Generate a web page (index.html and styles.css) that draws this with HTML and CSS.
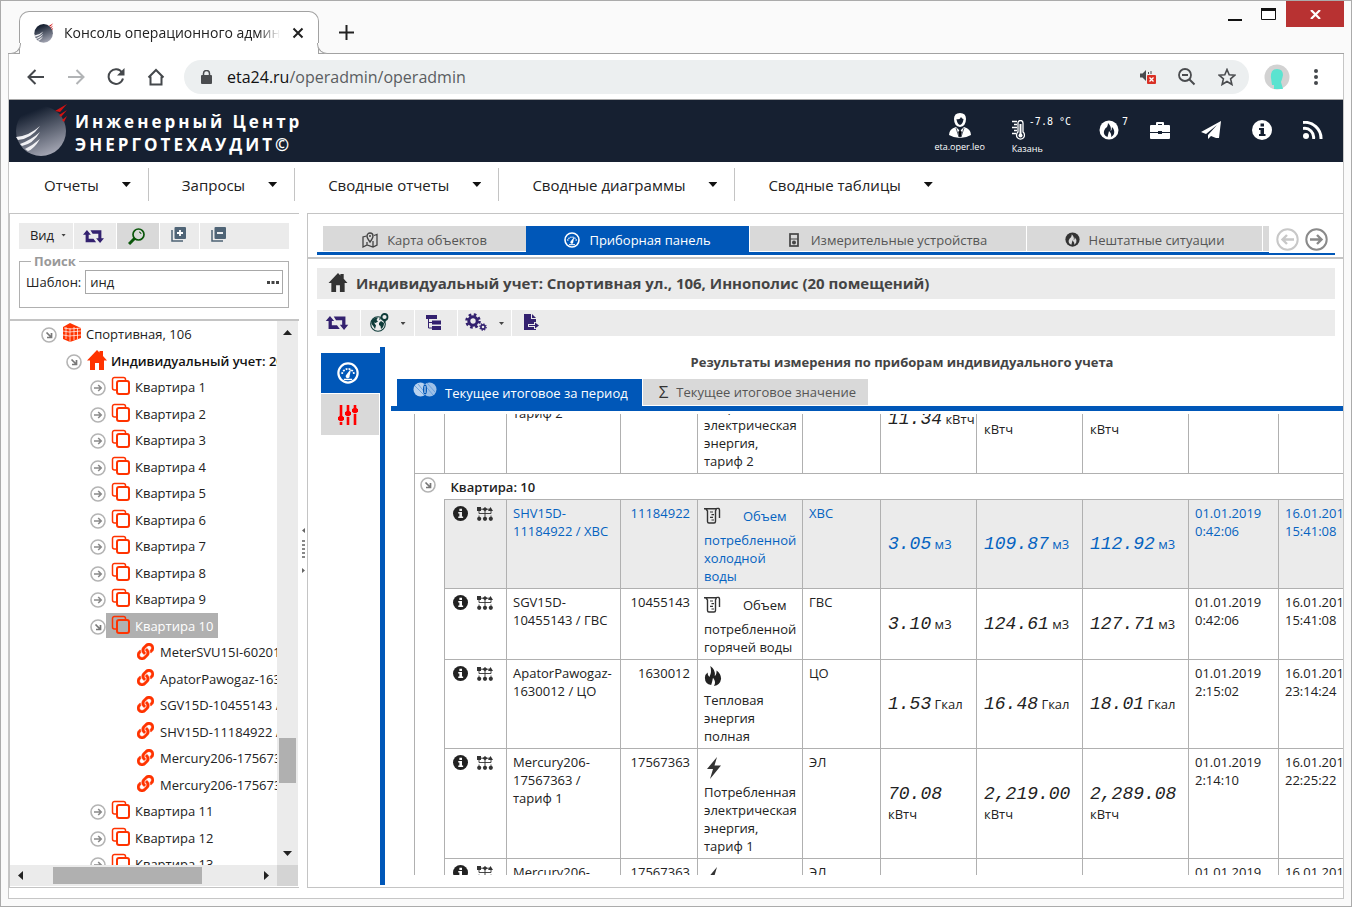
FILE: index.html
```html
<!DOCTYPE html>
<html lang="ru">
<head>
<meta charset="utf-8">
<title>Консоль операционного администратора</title>
<link rel="stylesheet" href="styles.css">
</head>
<body>
<svg class="defs" aria-hidden="true">
  <defs>
    <linearGradient id="ball" x1="0.3" y1="0" x2="0.7" y2="1"><stop offset="0.1" stop-color="#162031"/><stop offset="1" stop-color="#a9abb8"/></linearGradient>
    <symbol id="logo" viewBox="0 0 54 54">
      <circle cx="26" cy="28" r="25" fill="url(#ball)"/>
      <path d="M1 34Q14 33 25 23Q16 36 3 37ZM5 41Q16 37 25 29Q18 41 7 43ZM10 46Q18 42 25 36Q19 46 13 48Z" fill="#f1f1f4"/>
      <path d="M40 8 52 1 45 9ZM44 12 52 7 46 14ZM47 17 52 13 49 19Z" fill="#d41212"/>
    </symbol>
    <symbol id="go" viewBox="0 0 16 16"><circle cx="8" cy="8" r="7" fill="none" stroke="#b4b4b4" stroke-width="1.6"/><path d="M4 8h7M8.200 5l3 3-3 3" fill="none" stroke="#8a8a8a" stroke-width="1.6"/></symbol>
    <symbol id="open" viewBox="0 0 16 16"><circle cx="8" cy="8" r="7" fill="none" stroke="#b4b4b4" stroke-width="1.6"/><path d="M5.500 5.500l5 5M10.500 6v4.500H6" fill="none" stroke="#777" stroke-width="1.700"/></symbol>
    <symbol id="flat" viewBox="0 0 20 20"><path d="M14.500 4V3.500A2 2 0 0 0 12.500 1.500H3.500A2 2 0 0 0 1.500 3.500V12A2 2 0 0 0 3.500 14H5" fill="none" stroke="#ff3300" stroke-width="1.500"/><rect x="6" y="5" width="12" height="13" rx="2" fill="none" stroke="#ff3300" stroke-width="2"/></symbol>
    <symbol id="link" viewBox="0 0 512 512"><path fill="#ff3300" stroke="#ff3300" stroke-width="12" d="M326.600 185.400c59.700 59.800 58.900 155.700.400 214.600l-67.500 67.500c-59.300 59.300-155.700 59.300-215 0-59.200-59.300-59.200-155.700 0-215l37.100-37.100c9.800-9.800 26.700-3.300 27.300 10.600.6 17.700 3.800 35.500 9.700 52.700 2 5.800.6 12.300-3.800 16.600l-13.100 13.100c-28 28-28.900 73.700-1.200 102 28 28.600 74.100 28.700 102.300.5l67.500-67.500c28.200-28.200 28-73.800 0-101.800-3.700-3.700-7.400-6.500-10.300-8.500a16 16 0 0 1-6.900-12.600c-.4-10.600 3.300-21.500 11.700-29.800l21.100-21.100c5.500-5.500 14.200-6.200 20.600-1.700a152 152 0 0 1 20.100 17.500zM467.500 44.400c-59.300-59.300-155.700-59.300-215 0l-67.500 67.500c-58.500 58.900-59.400 154.900.4 214.700a153 153 0 0 0 20.500 17.500c6.400 4.500 15.100 3.800 20.600-1.700l21.100-21.100c8.400-8.400 12.100-19.200 11.700-29.800a16 16 0 0 0-6.900-12.600c-2.900-2-6.600-4.800-10.300-8.500-28-28-28.200-73.600 0-101.800l67.500-67.500c28.200-28.200 74.300-28.100 102.300.5 27.800 28.300 26.900 73.900-1.200 102l-13.100 13.100c-4.400 4.400-5.800 10.800-3.800 16.600 5.900 17.200 9 35 9.700 52.700.5 13.900 17.500 20.400 27.300 10.600l37.100-37.100c59.300-59.300 59.300-155.700 0-215z"/></symbol>
    <symbol id="house" viewBox="0 0 20 20"><path d="M10 0 12.500 2.500V1H16V6L20 10.500H17V20H12V13H8V20H3V10.500H0Z" fill="currentColor"/></symbol>
    <symbol id="swap" viewBox="0 0 24 16"><path d="M4.500 1 9 6.500H6.500V11H12L15 15H3V6.500H0ZM19.500 16 15 10.500H17.500V5.500H11L8.500 1.500H21V10.500H24Z" fill="#33216f"/></symbol>
    <symbol id="gauge" viewBox="0 0 24 24"><circle cx="12" cy="12" r="10.500" fill="none" stroke="#fff" stroke-width="2.400"/><path d="M5.500 13A6.600 6.600 0 0 1 18.500 13" fill="none" stroke="#fff" stroke-width="2" stroke-dasharray="2 1.200"/><path d="M15.500 7 13.800 15A2.200 2.200 0 1 1 10.200 13.800Z" fill="#fff"/><path d="M7.500 19h9" stroke="#fff" stroke-width="1.500"/></symbol>
    <symbol id="flame" viewBox="0 0 20 22"><path d="M7 0Q13 4 12 11Q14 10 14 5Q19 9 19 14Q18 21 11 22Q14 18 10 13Q9 18 8 21Q1 20 1 13Q1 9 4 7Q4 11 6 12Q9 7 7 0Z" fill="currentColor"/></symbol>
    <symbol id="info" viewBox="0 0 20 20"><circle cx="10" cy="10" r="10" fill="currentColor"/><path d="M8.500 3.500h3.500v3H8.500ZM7 8h5v6h1.500v2H7v-2h1.500v-4H7Z" fill="var(--hole)"/></symbol>
    <symbol id="net" viewBox="0 0 16 14"><path d="M0 0h4v4H0ZM8 0l2.500 2.200L8 4.400 5.500 2.200ZM13.500 0 16 4h-5Z" fill="#333"/><path d="M2 4v2.500h12V4M2 11V8.500M8 4v7M14 11V8.500M3 2.200h10" stroke="#333" stroke-width="0.900" fill="none"/><circle cx="2.200" cy="11.800" r="2.100" fill="#333"/><circle cx="8" cy="11.800" r="2.100" fill="#333"/><circle cx="13.800" cy="11.800" r="2.100" fill="#333"/></symbol>
    <symbol id="beaker" viewBox="0 0 17 17"><path d="M0 1.700h12.500L11.500 4V14.500q0 1.500-1.500 1.500H5q-1.500 0-1.500-1.500V4L2 2M12 1.700q3.500-1 3.500 1.300v8" fill="none" stroke="#333" stroke-width="1.400"/><path d="M6 5h3M7.500 7.700H10M6 10.400h3M7.500 13H10" stroke="#333" stroke-width="1.200"/></symbol>
    <symbol id="bolt" viewBox="0 0 14 22"><path d="M10 0 0 12H6L3 22 14 8.500H7.500Z" fill="#333"/></symbol>
    <symbol id="firedisc" viewBox="0 0 20 20"><circle cx="10" cy="10" r="9.500" fill="currentColor"/><path d="M9 3Q13 7 11.500 11Q13 10 13 7Q16 10 15 14Q14 16 12 17Q13 14 10 11Q9 15 8.500 17Q4 15 5 11Q6 8 8 7Q9 5 9 3Z" fill="var(--hole)"/></symbol>
  </defs>
</svg>

<div class="titlebar">
  <div class="browser-tab">
    <svg class="favicon"><use href="#logo"/></svg>
    <span class="tab-title">Консоль операционного администратора</span>
    <button class="plain" aria-label="Закрыть вкладку"><svg width="12" height="12" viewBox="0 0 12 12"><path d="M1.500 1.500l9 9M10.500 1.500l-9 9" stroke="#222" stroke-width="2"/></svg></button>
  </div>
  <button class="plain new-tab" aria-label="Новая вкладка"><svg width="15" height="15" viewBox="0 0 15 15"><path d="M7.500 0v15M0 7.500h15" stroke="#222" stroke-width="2"/></svg></button>
  <div class="window-buttons">
    <button class="plain" aria-label="Свернуть"><svg width="14" height="14" viewBox="0 0 14 14"><path d="M0 12h14" stroke="#111" stroke-width="2"/></svg></button>
    <button class="plain" aria-label="Развернуть"><svg width="15" height="12" viewBox="0 0 15 12"><path d="M.5 2v9.500h14V2" fill="#fff" stroke="#111"/><path d="M0 0h15v3H0z" fill="#111"/></svg></button>
    <button class="plain win-close" aria-label="Закрыть"><svg width="11" height="9" viewBox="0 0 11 9"><path d="M1 0l9 9M10 0L1 9" stroke="#fff" stroke-width="2.200"/></svg></button>
  </div>
</div>

<div class="frame">
  <div class="addressbar">
    <button class="plain" aria-label="Назад"><svg width="18" height="16" viewBox="0 0 18 16"><path d="M17 8H2M8.500 1L1.500 8l7 7" fill="none" stroke="#45484c" stroke-width="2"/></svg></button>
    <button class="plain" aria-label="Вперёд"><svg width="18" height="16" viewBox="0 0 18 16"><path d="M1 8h15M9.500 1l7 7-7 7" fill="none" stroke="#b2b4b6" stroke-width="2"/></svg></button>
    <button class="plain" aria-label="Обновить"><svg width="18" height="17" viewBox="0 0 18 17"><path d="M15 4.500A7.300 7.300 0 1 0 16 10.500" fill="none" stroke="#45484c" stroke-width="2"/><path d="M17.500 0v7.500H10z" fill="#45484c"/></svg></button>
    <button class="plain" aria-label="Домой"><svg width="18" height="18" viewBox="0 0 18 18"><path d="M1.500 9.500 9 2l7.500 7.500M3.500 8.500V16.500h11V8.500" fill="none" stroke="#45484c" stroke-width="2"/></svg></button>
    <div class="omnibox">
      <svg width="11" height="14" viewBox="0 0 11 14"><rect y="5" width="11" height="9" rx="1" fill="#4a4c4f"/><path d="M2.500 6V3.500a3 3 0 0 1 6 0V6" fill="none" stroke="#4a4c4f" stroke-width="1.500"/></svg>
      <div class="url" role="textbox" contenteditable="true" spellcheck="false" aria-label="Адрес">eta24.ru<span>/operadmin/operadmin</span></div>
      <svg width="17" height="17" viewBox="0 0 17 17"><path d="M1 5.500h2.500L7 2v11L3.500 9.500H1Z" fill="#4a4c4f"/><path d="M9.500 4v2M12 3v3" stroke="#4a4c4f"/><rect x="8" y="7" width="9" height="9" rx="1" fill="#d93025"/><path d="M10.500 9.500l4 4M14.500 9.500l-4 4" stroke="#fff" stroke-width="1.300"/></svg>
      <svg width="18" height="18" viewBox="0 0 18 18"><circle cx="7" cy="7" r="6" fill="none" stroke="#4a4c4f" stroke-width="1.800"/><path d="M4 7h6M11.500 11.500l5 5" stroke="#4a4c4f" stroke-width="2"/></svg>
      <svg width="18" height="18" viewBox="0 0 18 18"><path d="M9 1.500l2.200 5.200 5.700.5-4.300 3.700 1.300 5.600L9 13.500l-4.900 3 1.300-5.600L1.100 7.200l5.700-.5Z" fill="none" stroke="#4a4c4f" stroke-width="1.600"/></svg>
    </div>
    <svg class="avatar" viewBox="0 0 26 26"><circle cx="13" cy="13" r="12.500" fill="#d2d2d2"/><path d="M13 5Q19 5 19 11Q18 16 17 18L19 25H10V21H8L7 14Q6 5 13 5Z" fill="#5be3d0"/></svg>
    <button class="plain kebab" aria-label="Меню"><svg width="4" height="16" viewBox="0 0 4 16"><circle cx="2" cy="2" r="2"/><circle cx="2" cy="8" r="2"/><circle cx="2" cy="14" r="2"/></svg></button>
  </div>

  <header class="app-header">
    <svg class="brand-logo"><use href="#logo"/></svg>
    <div class="brand">Инженерный Центр<br>ЭНЕРГОТЕХАУДИТ©</div>
    <div class="header-item user">
      <svg width="22" height="25" viewBox="0 0 22 25"><path d="M5 6Q5 0 11 0Q17 0 17 6Q17 13 11 14Q5 13 5 6Z" fill="#fff"/><path d="M7.500 6Q11 7 12 4Q13 6 14.500 6Q14 11 11 12Q8 11 7.500 6Z" fill="#162031"/><path d="M0 22Q0 16 7 14L11 18 15 14Q22 16 22 22Q17 25 11 25Q5 25 0 22Z" fill="#fff"/><path d="M11 17l1.500 2-.8 5h-1.400l-.8-5ZM7 15l3 9M15 15l-3 9" stroke="#162031" stroke-width=".7"/></svg>
      <span class="caption">eta.oper.leo</span>
    </div>
    <div class="header-item weather">
      <div class="weather-row"><svg width="13" height="20" viewBox="0 0 13 20"><path d="M0 1.500h5M2 4.500h3M0 7.500h5M2 10.500h3M0 13.500h4" stroke="#fff" stroke-width="1.500"/><path d="M6 3a2.500 2.500 0 0 1 5 0v9a4 4 0 1 1-5 0Z" fill="#162031" stroke="#fff" stroke-width="1.300"/><path d="M8.500 4v11" stroke="#fff" stroke-width="2"/><circle cx="8.500" cy="15.500" r="2" fill="#fff"/></svg><span class="mono">-7.8 °C</span></div>
      <span class="caption">Казань</span>
    </div>
    <div class="header-icons">
      <button class="plain with-count" aria-label="Нештатные ситуации"><svg width="20" height="20"><use href="#firedisc"/></svg><span class="count mono">7</span></button>
      <button class="plain" aria-label="Портфель"><svg width="20" height="17" viewBox="0 0 20 17"><path d="M6 3V1q0-1 1-1h6q1 0 1 1v2h5q1 0 1 1v6H12V9H8v1H0V4q0-1 1-1ZM8 3h4V2H8ZM0 11h8v1h4v-1h8v5q0 1-1 1H1q-1 0-1-1Z" fill="#fff"/></svg></button>
      <button class="plain" aria-label="Сообщения"><svg width="20" height="18" viewBox="0 0 20 18"><path d="M20 0 0 11 5 13 16 4 7 14V18L10 15 15 17H18Z" fill="#fff"/></svg></button>
      <button class="plain" aria-label="Информация"><svg width="20" height="20"><use href="#info"/></svg></button>
      <button class="plain" aria-label="RSS"><svg width="20" height="18" viewBox="0 0 20 18"><circle cx="3" cy="15" r="3" fill="#fff"/><path d="M0 7.500A9 9 0 0 1 10.500 18M0 1.500A16 16 0 0 1 18 18" fill="none" stroke="#fff" stroke-width="3"/></svg></button>
    </div>
  </header>

  <nav class="menu">
    <button class="plain menu-item">Отчеты<i class="caret"></i></button>
    <button class="plain menu-item">Запросы<i class="caret"></i></button>
    <button class="plain menu-item">Сводные отчеты<i class="caret"></i></button>
    <button class="plain menu-item">Сводные диаграммы<i class="caret"></i></button>
    <button class="plain menu-item">Сводные таблицы<i class="caret"></i></button>
  </nav>

  <main class="main">
    <aside class="left-panel">
      <div class="toolbar tree-toolbar">
        <button class="plain tool view-tool">Вид <i class="caret small"></i></button>
        <button class="plain tool" aria-label="Обновить"><svg width="21" height="14"><use href="#swap"/></svg></button>
        <button class="plain tool pressed" aria-label="Поиск"><svg width="17" height="17" viewBox="0 0 17 17"><circle cx="10.500" cy="6.500" r="5.500" fill="none" stroke="#0a560a" stroke-width="1.700"/><path d="M6.500 10.500l-5.500 5.500" stroke="#0a560a" stroke-width="3"/><path d="M11 4q2 0 2 2" fill="none" stroke="#0a560a"/></svg></button>
        <button class="plain tool" aria-label="Развернуть все"><svg width="15" height="15" viewBox="0 0 15 15"><path d="M1 3v11h11" fill="none" stroke="#4f6476" stroke-width="1.500"/><rect x="3.500" width="11.500" height="12" rx="1" fill="#4f6476"/><path d="M9 3v6M6 6h6" stroke="#fff" stroke-width="1.800"/></svg></button>
        <button class="plain tool" aria-label="Свернуть все"><svg width="15" height="15" viewBox="0 0 15 15"><path d="M1 3v11h11" fill="none" stroke="#4f6476" stroke-width="1.500"/><rect x="3.500" width="11.500" height="12" rx="1" fill="#4f6476"/><path d="M6 6h6" stroke="#fff" stroke-width="1.800"/></svg></button>
      </div>
      <fieldset class="search">
        <legend>Поиск</legend>
        <label for="pattern">Шаблон:</label>
        <div class="search-box"><input id="pattern" type="text" value="инд"><button class="plain" aria-label="Выбрать"><svg width="12" height="3" viewBox="0 0 12 3"><path d="M0 0h3v3H0zM4.500 0h3v3h-3zM9 0h3v3H9z" fill="#444"/></svg></button></div>
      </fieldset>
      <div class="tree-area">
        <ul class="tree">
          <li class="l0"><svg class="twist"><use href="#open"/></svg><span class="node"><svg viewBox="0 0 20 20"><path d="M8 0 19 5V15L8 19 1 16V4Z" fill="#ff3300"/><path d="M1 8l6 1 12-1M1 12l6 1 12-1M8 5v14M4 4v12M12 4v13M15.500 5v11M2 5l6 1 11-1" stroke="#fff" fill="none" stroke-width=".7"/></svg>Спортивная, 106</span></li>
          <li class="l1"><svg class="twist"><use href="#open"/></svg><span class="node strong"><svg class="orange"><use href="#house"/></svg>Индивидуальный учет: 20 помещений</span></li>
          <li class="l2"><svg class="twist"><use href="#go"/></svg><span class="node"><svg><use href="#flat"/></svg>Квартира 1</span></li>
          <li class="l2"><svg class="twist"><use href="#go"/></svg><span class="node"><svg><use href="#flat"/></svg>Квартира 2</span></li>
          <li class="l2"><svg class="twist"><use href="#go"/></svg><span class="node"><svg><use href="#flat"/></svg>Квартира 3</span></li>
          <li class="l2"><svg class="twist"><use href="#go"/></svg><span class="node"><svg><use href="#flat"/></svg>Квартира 4</span></li>
          <li class="l2"><svg class="twist"><use href="#go"/></svg><span class="node"><svg><use href="#flat"/></svg>Квартира 5</span></li>
          <li class="l2"><svg class="twist"><use href="#go"/></svg><span class="node"><svg><use href="#flat"/></svg>Квартира 6</span></li>
          <li class="l2"><svg class="twist"><use href="#go"/></svg><span class="node"><svg><use href="#flat"/></svg>Квартира 7</span></li>
          <li class="l2"><svg class="twist"><use href="#go"/></svg><span class="node"><svg><use href="#flat"/></svg>Квартира 8</span></li>
          <li class="l2"><svg class="twist"><use href="#go"/></svg><span class="node"><svg><use href="#flat"/></svg>Квартира 9</span></li>
          <li class="l2"><svg class="twist"><use href="#open"/></svg><span class="node selected"><svg><use href="#flat"/></svg>Квартира 10</span></li>
          <li class="l3"><span class="node"><svg><use href="#link"/></svg>MeterSVU15I-60201584</span></li>
          <li class="l3"><span class="node"><svg><use href="#link"/></svg>ApatorPawogaz-1630012</span></li>
          <li class="l3"><span class="node"><svg><use href="#link"/></svg>SGV15D-10455143 / ГВС</span></li>
          <li class="l3"><span class="node"><svg><use href="#link"/></svg>SHV15D-11184922 / ХВС</span></li>
          <li class="l3"><span class="node"><svg><use href="#link"/></svg>Mercury206-17567363</span></li>
          <li class="l3"><span class="node"><svg><use href="#link"/></svg>Mercury206-17567363</span></li>
          <li class="l2"><svg class="twist"><use href="#go"/></svg><span class="node"><svg><use href="#flat"/></svg>Квартира 11</span></li>
          <li class="l2"><svg class="twist"><use href="#go"/></svg><span class="node"><svg><use href="#flat"/></svg>Квартира 12</span></li>
          <li class="l2"><svg class="twist"><use href="#go"/></svg><span class="node"><svg><use href="#flat"/></svg>Квартира 13</span></li>
        </ul>
        <div class="vbar"><i class="arrow up"></i><div class="vtrack"><div class="vthumb"></div></div><i class="arrow down"></i></div>
        <div class="hbar"><i class="arrow left"></i><div class="htrack"><div class="hthumb"></div></div><i class="arrow right"></i></div>
        <div class="bar-corner"></div>
      </div>
    </aside>

    <div class="splitter"><svg width="5" height="46" viewBox="0 0 5 46"><path d="M4 0v5L1 2.500ZM1 40v5l3-2.500Z" fill="#666"/><path d="M1 13h3M1 17h3M1 21h3M1 25h3M1 29h3" stroke="#888" stroke-width="2"/></svg></div>

    <section class="right-panel">
      <div class="tabs-wrap">
        <div class="tabs" role="tablist">
          <button class="plain tab t1" role="tab"><svg width="16" height="16" viewBox="0 0 16 16"><path d="M4.500 4 1 5V15l4-2 6 2 4-2V2.500l-3 1M5 10v3M11 9v6" fill="none" stroke="#444" stroke-width="1.300"/><path d="M8 1a3 3 0 0 1 3 3q0 2-3 6Q5 6 5 4a3 3 0 0 1 3-3Z" fill="none" stroke="#444" stroke-width="1.400"/><circle cx="8" cy="4" r="1" fill="#444"/></svg>Карта объектов</button>
          <button class="plain tab t2 active" role="tab" aria-selected="true"><svg width="16" height="16"><use href="#gauge"/></svg>Приборная панель</button>
          <button class="plain tab t3" role="tab"><svg width="10" height="14" viewBox="0 0 10 14"><rect x="1" y="1" width="8" height="12" fill="none" stroke="#444" stroke-width="1.700"/><path d="M1 6h8" stroke="#444"/><circle cx="5" cy="9.500" r="2" fill="#444"/></svg>Измерительные устройства</button>
          <button class="plain tab t4" role="tab"><svg width="15" height="15"><use href="#firedisc"/></svg>Нештатные ситуации</button>
          <span class="tab t5"></span>
        </div>
        <div class="tab-scroll">
          <button class="plain dim" aria-label="Назад"><svg width="23" height="23" viewBox="0 0 23 23"><circle cx="11.500" cy="11.500" r="10.200" fill="none" stroke="currentColor" stroke-width="2"/><path d="M18 11.500H6.500M11 7l-4.500 4.500L11 16" fill="none" stroke="currentColor" stroke-width="2.400"/></svg></button>
          <button class="plain" aria-label="Вперёд"><svg width="23" height="23" viewBox="0 0 23 23"><circle cx="11.500" cy="11.500" r="10.200" fill="none" stroke="currentColor" stroke-width="2"/><path d="M5 11.500h11.500M12 7l4.500 4.500L12 16" fill="none" stroke="currentColor" stroke-width="2.400"/></svg></button>
        </div>
      </div>

      <h1 class="page-title"><svg width="20" height="19"><use href="#house"/></svg>Индивидуальный учет: Спортивная ул., 106, Иннополис (20 помещений)</h1>

      <div class="toolbar page-toolbar">
        <button class="plain tool" aria-label="Обновить"><svg width="24" height="15"><use href="#swap"/></svg></button>
        <button class="plain tool wide" aria-label="Карта"><svg width="19" height="19" viewBox="0 0 19 19"><circle cx="8" cy="11" r="7.300" fill="#ebebeb" stroke="#0e3b39" stroke-width="1.100"/><path d="M1.500 8Q4 4 8 4.500L6.500 7 8 8.500 5.500 10 4 9.500 6 12.500 5 16Q3.500 13 1.500 11ZM9 10l2-2 3 2q0 4-3 6L10.500 13 9 12ZM10 4l1 2-2 1Z" fill="#0e3b39"/><circle cx="14.500" cy="4" r="3" fill="#ebebeb" stroke="#0e3b39" stroke-width="1.800"/><path d="M12.500 6.500h4l-2 4Z" fill="#0e3b39"/></svg><i class="caret small"></i></button>
        <button class="plain tool" aria-label="Структура"><svg width="16" height="15" viewBox="0 0 16 15"><path d="M0 0h11v4H0zM6 5.500h9v4H6zM6 11h9v4H6z" fill="#33216f"/><path d="M2.500 4v9H6M2.500 7.500H6" fill="none" stroke="#33216f"/></svg></button>
        <button class="plain tool wide" aria-label="Настройки"><svg width="22" height="18" viewBox="0 0 22 18"><circle cx="8" cy="8" r="4.200" fill="none" stroke="#33216f" stroke-width="3"/><circle cx="8" cy="8" r="6.500" fill="none" stroke="#33216f" stroke-width="2.600" stroke-dasharray="2.600 2.505"/><circle cx="18" cy="14" r="2.100" fill="none" stroke="#33216f" stroke-width="1.600"/><circle cx="18" cy="14" r="3.200" fill="none" stroke="#33216f" stroke-width="1.200" stroke-dasharray="1.250 1.260"/></svg><i class="caret small"></i></button>
        <button class="plain tool" aria-label="Экспорт"><svg width="15" height="16" viewBox="0 0 15 16"><path d="M0 0h7v5h5v3h-2v2H4v3h6v2h2v1H0ZM8 0l4 4H8Z" fill="#33216f"/><path d="M5 11h6V8.500l4 3-4 3V12H5Z" fill="#33216f"/></svg></button>
      </div>

      <div class="content">
        <div class="side-tabs">
          <button class="plain side-tab active" aria-label="Приборная панель"><svg width="22" height="22"><use href="#gauge"/></svg></button>
          <button class="plain side-tab" aria-label="Параметры"><svg width="20" height="20" viewBox="0 0 20 20"><path d="M3 0v13M3 17v3M10 0v6M10 12v8M17 0v3M17 9v11" stroke="#f00" stroke-width="2.600"/><path d="M0 13.500h6M7 8.500h6M14 5.500h6" stroke="#f00" stroke-width="3"/><circle cx="3" cy="13.500" r="2.800" fill="#f00"/><circle cx="10" cy="8.500" r="2.800" fill="#f00"/><circle cx="17" cy="5.500" r="2.800" fill="#f00"/></svg></button>
        </div>
        <div class="results">
          <h2>Результаты измерения по приборам индивидуального учета</h2>
          <div class="sub-tabs" role="tablist">
            <button class="plain sub-tab active" role="tab" aria-selected="true"><svg class="rings" width="24" height="15" viewBox="0 0 24 15"><circle cx="7.500" cy="7.500" r="7" fill="#b8d2ef"/><circle cx="16.500" cy="7.500" r="7" fill="#b8d2ef" fill-opacity=".85"/><path d="M2 4l9 9M5 2l8 10M10 1l10 12M14 1l8 9" stroke="#5c98da" stroke-width=".8"/><ellipse cx="12" cy="7.500" rx="2" ry="5" fill="#0057b8"/><path d="M12 4v7" stroke="#dbe9f8"/></svg>Текущее итоговое за период</button>
            <button class="plain sub-tab second" role="tab"><span class="sigma">Σ</span>Текущее итоговое значение</button>
          </div>
          <div class="grid-view">
            <table class="grid">
              <colgroup><col class="c-exp"><col class="c-act"><col class="c-name"><col class="c-num"><col class="c-par"><col class="c-type"><col class="c-v1"><col class="c-v2"><col class="c-v2"><col class="c-date"><col class="c-date"></colgroup>
              <tbody>
              <tr><td class="rail"></td><td class="acts"><div><svg class="i-info"><use href="#info"/></svg><svg class="i-net"><use href="#net"/></svg></div></td><td>Mercury206-<br>17567363 /<br>тариф 2</td><td class="num">17567363</td><td><div class="lead tall"><svg width="14" height="22"><use href="#bolt"/></svg></div>Потребленная<br>электрическая<br>энергия,<br>тариф 2</td><td>ЭЛ</td><td class="val"><b>11.34</b> кВтч</td><td class="val"><b>155.03</b><br>кВтч</td><td class="val"><b>865.23</b><br>кВтч</td><td>01.01.2019<br>2:14:10</td><td>16.01.2019<br>22:25:22</td></tr>
              <tr class="group"><td class="rail"><svg class="twist"><use href="#open"/></svg></td><td colspan="10">Квартира: 10</td></tr>
              <tr class="current"><td class="rail"></td><td class="acts"><div><svg class="i-info"><use href="#info"/></svg><svg class="i-net"><use href="#net"/></svg></div></td><td>SHV15D-<br>11184922 / ХВС</td><td class="num">11184922</td><td><div class="lead"><svg width="17" height="17"><use href="#beaker"/></svg>Объем</div>потребленной<br>холодной<br>воды</td><td>ХВС</td><td class="val"><b>3.05</b> м3</td><td class="val"><b>109.87</b> м3</td><td class="val"><b>112.92</b> м3</td><td>01.01.2019<br>0:42:06</td><td>16.01.2019<br>15:41:08</td></tr>
              <tr><td class="rail"></td><td class="acts"><div><svg class="i-info"><use href="#info"/></svg><svg class="i-net"><use href="#net"/></svg></div></td><td>SGV15D-<br>10455143 / ГВС</td><td class="num">10455143</td><td><div class="lead"><svg width="17" height="17"><use href="#beaker"/></svg>Объем</div>потребленной<br>горячей воды</td><td>ГВС</td><td class="val"><b>3.10</b> м3</td><td class="val"><b>124.61</b> м3</td><td class="val"><b>127.71</b> м3</td><td>01.01.2019<br>0:42:06</td><td>16.01.2019<br>15:41:08</td></tr>
              <tr><td class="rail"></td><td class="acts"><div><svg class="i-info"><use href="#info"/></svg><svg class="i-net"><use href="#net"/></svg></div></td><td>ApatorPawogaz-<br>1630012 / ЦО</td><td class="num">1630012</td><td><div class="lead"><svg width="18" height="20"><use href="#flame"/></svg></div>Тепловая<br>энергия<br>полная</td><td>ЦО</td><td class="val"><b>1.53</b> Гкал</td><td class="val"><b>16.48</b> Гкал</td><td class="val"><b>18.01</b> Гкал</td><td>01.01.2019<br>2:15:02</td><td>16.01.2019<br>23:14:24</td></tr>
              <tr><td class="rail"></td><td class="acts"><div><svg class="i-info"><use href="#info"/></svg><svg class="i-net"><use href="#net"/></svg></div></td><td>Mercury206-<br>17567363 /<br>тариф 1</td><td class="num">17567363</td><td><div class="lead tall"><svg width="14" height="22"><use href="#bolt"/></svg></div>Потребленная<br>электрическая<br>энергия,<br>тариф 1</td><td>ЭЛ</td><td class="val"><b>70.08</b><br>кВтч</td><td class="val"><b>2,219.00</b><br>кВтч</td><td class="val"><b>2,289.08</b><br>кВтч</td><td>01.01.2019<br>2:14:10</td><td>16.01.2019<br>22:25:22</td></tr>
              <tr><td class="rail"></td><td class="acts"><div><svg class="i-info"><use href="#info"/></svg><svg class="i-net"><use href="#net"/></svg></div></td><td>Mercury206-<br>17567363 /<br>тариф 2</td><td class="num">17567363</td><td><div class="lead tall"><svg width="14" height="22"><use href="#bolt"/></svg></div>Потребленная<br>электрическая<br>энергия,<br>тариф 2</td><td>ЭЛ</td><td class="val"></td><td class="val"></td><td class="val"></td><td>01.01.2019<br>2:14:10</td><td>16.01.2019<br>22:25:22</td></tr>
              </tbody>
            </table>
          </div>
        </div>
      </div>
    </section>
  </main>
</div>
</body>
</html>
```
FILE: styles.css
```css
* { box-sizing: border-box; }
html { height: 100%; }
body {
  margin: 0;
  height: 100%;
  display: flex;
  flex-direction: column;
  border: 1px solid #ababab;
  padding: 0 7px 7px;
  background: #fafafa;
  color: #222;
  font: 13px/18px "Open Sans", "Noto Sans", sans-serif;
  overflow: hidden;
}
svg { display: block; flex: none; }
.defs { position: absolute; width: 0; height: 0; }
.plain { border: 0; padding: 0; margin: 0; background: none; font: inherit; color: inherit; display: flex; align-items: center; white-space: nowrap; }

/* browser window */
.titlebar { display: flex; align-items: flex-start; height: 53px; flex: none; border-bottom: 1px solid #a2a2a2; }
.browser-tab {
  position: relative;
  display: flex;
  align-items: center;
  width: 300px;
  height: 43px;
  margin: 10px 0 0 11px;
  padding: 0 14px;
  background: #fff;
  border: 1px solid #a2a2a2;
  border-bottom: 0;
  border-radius: 10px 10px 0 0;
}
.browser-tab::before, .browser-tab::after {
  content: "";
  position: absolute;
  bottom: 0;
  width: 10px;
  height: 10px;
  border-bottom: 1px solid #a2a2a2;
  background: #fafafa;
}
.browser-tab::before { left: -10px; border-right: 1px solid #a2a2a2; border-bottom-right-radius: 10px; }
.browser-tab::after { right: -10px; border-left: 1px solid #a2a2a2; border-bottom-left-radius: 10px; }
.favicon { width: 20px; height: 20px; }
.tab-title { flex: 1; margin: 0 12px 0 10px; overflow: hidden; white-space: nowrap; font-size: 14px; line-height: 20px; -webkit-mask-image: linear-gradient(to right, #000 90%, transparent); mask-image: linear-gradient(to right, #000 90%, transparent); }
.new-tab { margin: 24px 0 0 20px; }
.window-buttons { display: flex; align-items: flex-start; margin-left: auto; gap: 19px; }
.window-buttons .plain { margin-top: 7px; }
.window-buttons .win-close { margin: 0 0 0 -9px; width: 58px; height: 26px; background: #b83232; justify-content: center; }

.frame { flex: 1; min-height: 0; display: flex; flex-direction: column; background: #fff; border: 1px solid #c6c6c6; border-top: 0; padding-bottom: 10px; }
.addressbar { display: flex; align-items: center; flex: none; height: 46px; padding: 0 25px 0 18px; border-bottom: 1px solid #a8a8a8; gap: 22px; }
.omnibox { flex: 1; display: flex; align-items: center; height: 34px; margin-left: -3px; padding: 0 13px 0 17px; border-radius: 17px; background: #eceff0; gap: 22px; }
.url { flex: 1; margin-left: -7px; font-size: 16px; line-height: 24px; color: #111; }
.url span { color: #5a5d61; }
.avatar { width: 26px; height: 26px; margin: 0 2px 0 -7px; }
.kebab { fill: #45484c; }

/* application header */
.app-header { display: flex; align-items: center; flex: none; height: 62px; padding: 0 20px 2px 6px; background: #162031; color: #fff; --hole: #162031; }
.brand-logo { width: 54px; height: 54px; }
.brand { flex: 1; margin: 6px 0 0 6px; font-size: 17px; line-height: 23px; font-weight: 700; letter-spacing: 3px; white-space: nowrap; }
.header-item { display: flex; flex-direction: column; align-items: center; margin-top: 5px; gap: 3px; }
.caption { font-size: 9px; line-height: 12px; }
.mono { font-family: "DejaVu Sans Mono", monospace; font-size: 10px; line-height: 12px; }
.weather { align-items: flex-start; margin-left: 27px; margin-top: 10px; }
.weather-row { display: flex; align-items: flex-start; gap: 4px; }
.weather-row svg { margin-top: 4px; }
.header-icons { display: flex; align-items: center; margin: 0 0 0 28px; gap: 31px; }
.header-icons .with-count { align-items: flex-start; margin-right: -9px; }
.with-count .count { margin-top: -4px; width: 9px; text-align: right; }

.menu { display: flex; flex: none; height: 51px; padding: 6px 0 12px 2px; }
.menu-item { padding: 0 17px 0 33px; font-size: 15px; line-height: 20px; border-right: 1px solid #c4c4c4; }
.menu-item:last-child { border-right: 0; }
.caret { display: block; width: 9px; height: 5px; margin-left: 23px; background: #111; clip-path: polygon(0 0, 100% 0, 50% 100%); }
.caret.small { width: 5px; height: 3px; margin-left: 7px; background: #444; }

/* panels */
.main { flex: 1; min-height: 0; display: flex; }
.left-panel { width: 290px; flex: none; display: flex; flex-direction: column; border: 1px solid #c4c4c4; border-right: 0; padding-top: 9px; }
.toolbar { display: flex; flex: none; height: 26px; background: #ebebeb; }
.tool { justify-content: center; width: 43px; border-right: 1px solid #fff; }
.tool.pressed { background: #d9d9d9; }
.tree-toolbar { margin: 0 10px 0 9px; }
.tree-toolbar .tool { padding-right: 3px; }
.tree-toolbar .view-tool { width: 55px; padding: 0 0 2px 4px; }
.tree-toolbar .tool:nth-child(n+4) { width: 40px; padding-bottom: 3px; }
.tree-toolbar .tool:last-child { border: 0; }
.search { display: flex; align-items: center; margin: 3px 10px 11px 9px; padding: 0 5px 9px 6px; border: 1px solid #b0b0b0; height: 56px; gap: 4px; }
.search legend { padding: 0 3px; margin-left: 5px; font-weight: 700; color: #999; line-height: 18px; }
.search-box { flex: 1; display: flex; align-items: center; height: 24px; border: 1px solid #a8a8a8; padding-right: 3px; }
.search-box input { flex: 1; min-width: 0; border: 0; padding: 0 4px; font: inherit; color: inherit; outline: 0; background: none; }
.search-box .plain { height: 20px; }

.tree-area { flex: 1; min-height: 0; display: grid; grid-template: minmax(0, 1fr) 21px / minmax(0, 1fr) 21px; border-top: 2px solid #c4c4c4; padding: 0 1px 1px 0; }
.tree { margin: 0; padding: 0; list-style: none; overflow: hidden; }
.tree li { display: flex; align-items: center; height: 27px; white-space: nowrap; }
.tree li:nth-child(odd) { height: 26px; }
.tree .l0 { padding-left: 31px; }
.tree .l1 { padding-left: 56px; }
.tree .l2 { padding-left: 80px; }
.tree .l3 { padding-left: 120px; }
.twist { width: 16px; height: 16px; }
.tree .twist { margin-top: 2px; }
.node { display: flex; align-items: center; height: 25px; padding: 0 5px; gap: 4px; }
.node svg { width: 20px; height: 20px; margin-bottom: 2px; }
.l3 .node svg { width: 17px; height: 17px; margin: 0 2px 2px; }
.node svg.orange { color: #ff3300; }
.strong { font-weight: 600; color: #111; }
.selected { background: #b0b0b0; color: #fff; }
.vbar { display: flex; flex-direction: column; align-items: center; background: #ebebeb; padding: 9px 0; }
.vtrack { flex: 1; width: 17px; display: flex; flex-direction: column; justify-content: flex-end; padding-bottom: 68px; }
.vthumb { height: 45px; background: #b0b0b0; }
.hbar { display: flex; align-items: center; background: #ebebeb; padding: 0 8px; }
.htrack { flex: 1; padding: 0 62px 0 30px; }
.hthumb { height: 17px; background: #b0b0b0; }
.bar-corner { background: #d4d4d4; }
.arrow { display: block; flex: none; background: #222; }
.up, .down { width: 9px; height: 5px; }
.left, .right { width: 5px; height: 9px; }
.up { clip-path: polygon(50% 0, 100% 100%, 0 100%); }
.down { clip-path: polygon(0 0, 100% 0, 50% 100%); }
.left { clip-path: polygon(0 50%, 100% 0, 100% 100%); }
.right { clip-path: polygon(0 0, 100% 50%, 0 100%); }
.splitter { width: 8px; flex: none; display: flex; align-items: center; justify-content: center; }

.right-panel { flex: 1; min-width: 0; display: flex; flex-direction: column; border: 1px solid #c4c4c4; border-right: 0; }
.tabs-wrap { display: flex; flex: none; height: 45px; padding: 12px 8px 0 9px; border-bottom: 2px solid #c4c4c4; }
.tabs { flex: 1; min-width: 0; display: flex; align-items: flex-start; gap: 1px; height: 29px; padding-left: 6px; overflow: hidden; background: linear-gradient(to top, #0057b8 3px, #fff 3px); }
.tab { justify-content: center; flex: none; height: 25px; padding-top: 2px; background: #d9d9d9; color: #555; gap: 9px; }
.tab.active, .sub-tab.active { background: #0057b8; color: #fff; }
.tab.active { height: 29px; padding-bottom: 3px; margin-left: -1px; }
.t1 { width: 203px; }
.t2 { width: 223px; }
.t3 { width: 276px; gap: 12px; }
.t4 { width: 235px; }
.t4 svg { color: #333; --hole: #d9d9d9; }
.t5 { width: 40px; }
.tab-scroll { display: flex; flex: none; align-items: center; width: 66px; height: 29px; padding-left: 7px; gap: 6px; border-bottom: 2px solid #0057b8; color: #8a8a8a; }
.dim { color: #c8c8c8; }

.page-title { display: flex; align-items: center; flex: none; height: 31px; margin: 9px 8px 0 9px; padding: 0 0 2px 11px; gap: 8px; background: #ebebeb; color: #444; font-size: 15px; line-height: 20px; font-weight: 700; white-space: nowrap; overflow: hidden; }
.page-title svg { color: #333; }
.page-toolbar { margin: 11px 8px 0 9px; }
.page-toolbar .tool { width: 43px; padding: 0 4px 2px 0; }
.page-toolbar .tool.wide { width: 54px; padding-right: 0; }
.page-toolbar .tool:first-child { width: 44px; }
.page-toolbar .tool:last-child { border: 0; }
.page-toolbar .caret.small { margin: 3px 0 0 12px; }

.content { flex: 1; min-height: 0; display: flex; padding: 11px 0 2px 13px; }
.side-tabs { flex: none; width: 64px; padding: 6px 0 0; border-right: 5px solid #0057b8; display: flex; flex-direction: column; gap: 1px; }
.side-tab { justify-content: center; width: 58px; height: 41px; padding-right: 4px; background: #d9d9d9; }
.side-tab.active { width: 59px; height: 40px; padding-right: 5px; background: #0057b8; }
.results { flex: 1; min-width: 0; display: flex; flex-direction: column; padding: 5px 0 10px 6px; }
.results h2 { margin: 0; padding-left: 70px; text-align: center; font-size: 13px; line-height: 20px; font-weight: 700; color: #444; white-space: nowrap; }
.sub-tabs { display: flex; align-items: flex-start; flex: none; height: 32px; margin-top: 7px; padding-left: 6px; border-bottom: 5px solid #0057b8; gap: 1px; }
.sub-tab { height: 26px; padding: 0 14px 0 16px; background: #d9d9d9; color: #555; gap: 8px; }
.sub-tab.second { padding-right: 12px; }
.rings { margin-bottom: 6px; }
.sub-tab.active { height: 27px; }
.sigma { font-size: 17px; color: #333; }

/* readings */
.grid-view { flex: 1; min-height: 0; margin: 3px 0 0 23px; overflow: hidden; }
.grid { width: 955px; margin-top: -51px; table-layout: fixed; border-collapse: collapse; --hole: #fff; }
.c-exp { width: 30px; }
.c-act { width: 62px; }
.c-name { width: 114px; }
.c-num { width: 77px; }
.c-par { width: 105px; }
.c-type { width: 78px; }
.c-v1 { width: 96px; }
.c-v2 { width: 106px; }
.c-date { width: 90px; }
.grid td { padding: 4px 0 3px 6px; border: 1px solid #b0b0b0; vertical-align: top; white-space: nowrap; }
.grid .rail { border-top: 0; border-bottom: 0; padding: 3px 0 0 6px; }
.grid .group td { border-top: 1px solid #b0b0b0; height: 26px; padding-top: 4px; padding-bottom: 3px; font-weight: 600; }
.grid .group td + td { border-left: 0; }
.grid .group .rail { border-right: 0; padding: 3px 0 0 5px; }
.grid .num { padding: 4px 7px 3px 0; text-align: right; }
.grid .val { vertical-align: middle; padding: 0 0 0 7px; line-height: 20px; }
.val b { font: italic 18px/20px "Liberation Mono", monospace; }
.grid .acts { color: #222; }
.acts div { display: flex; align-items: center; gap: 9px; padding: 2px 0 0 2px; }
.i-info { width: 15px; height: 15px; }
.i-net { width: 16px; height: 14px; }
.lead { display: flex; align-items: center; height: 27px; gap: 22px; padding-bottom: 4px; color: inherit; }
.lead.tall { height: 30px; padding: 0 0 1px 3px; }
.current td:not(.rail) { background: #ebebeb; color: #0563c1; }
.current .acts svg { color: #222; --hole: #ebebeb; }
```
